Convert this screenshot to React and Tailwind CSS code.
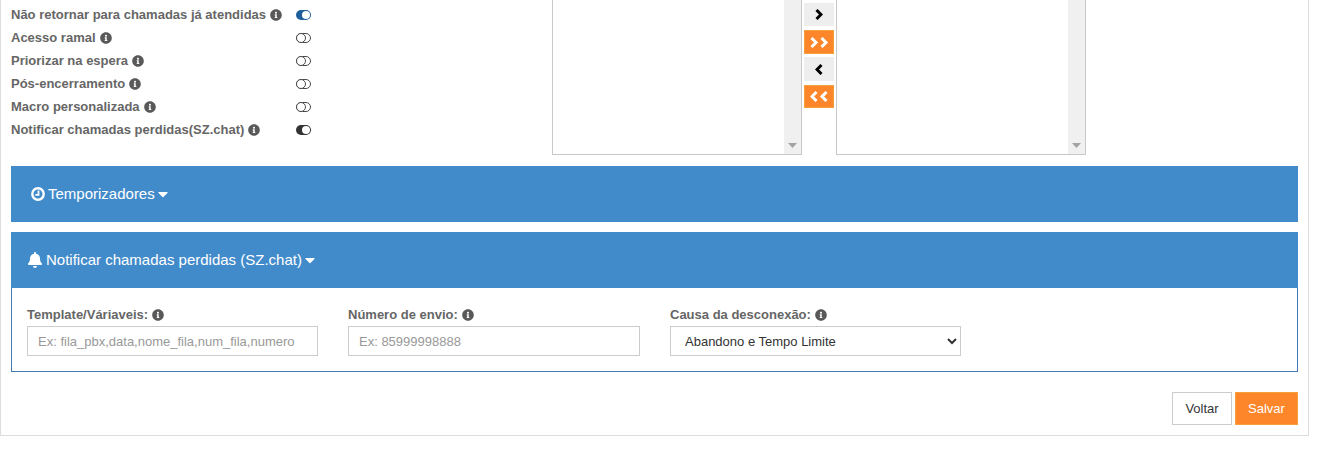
import React from "react";
import { FaInfoCircle, FaBell, FaCaretDown } from "react-icons/fa";

function Toggle({ state }) {
  if (state === "off") {
    return (
      <span className="ml-px flex h-[10px] w-[15px] items-center rounded-full border border-[#4a4a4a] bg-white">
        <span className="-ml-px h-[10px] w-[10px] shrink-0 rounded-full border border-[#4a4a4a] bg-white" />
      </span>
    );
  }
  const bg = state === "blue" ? "bg-[#1f5f9e]" : "bg-[#333333]";
  return (
    <span className={`ml-px flex h-[10px] w-[15px] items-center justify-end rounded-full pr-px ${bg}`}>
      <span className="h-2 w-2 rounded-full bg-white" />
    </span>
  );
}

const rows = [
  ["Não retornar para chamadas já atendidas", "blue"],
  ["Acesso ramal", "off"],
  ["Priorizar na espera", "off"],
  ["Pós-encerramento", "off"],
  ["Macro personalizada", "off"],
  ["Notificar chamadas perdidas(SZ.chat)", "dark"],
];

function Info() {
  return <FaInfoCircle className="ml-1 inline-block h-3 w-3 shrink-0 text-[#595959]" />;
}

function Listbox() {
  return (
    <div className="flex h-[155px] w-[250px] border border-t-0 border-[#c8c8c8] bg-white">
      <div className="flex-1" />
      <div className="flex w-[17px] flex-col items-center justify-end bg-[#f0f0f0] pb-[6px]">
        <svg width="9" height="5" viewBox="0 0 9 5"><path d="M0 0h9L4.500 5z" fill="#a3a3a3" /></svg>
      </div>
    </div>
  );
}

function Chevron({ dir, double, color }) {
  const d = dir === "right" ? "M1.500 1 6 5.500 1.500 10" : "M6.500 1 2 5.500 6.500 10";
  return (
    <svg width={double ? 19 : 8} height="11" viewBox={double ? "0 0 19 11" : "0 0 8 11"} fill="none" stroke={color} strokeWidth="3">
      <path d={d} />
      {double && <path d={d} transform="translate(10 0)" />}
    </svg>
  );
}

function Field({ label, className, children }) {
  return (
    <div className={`flex flex-col ${className}`}>
      <label className="mb-[3px] flex h-[17px] items-center text-[13px] font-bold text-[#666666]">
        {label}
        <Info />
      </label>
      {children}
    </div>
  );
}

export default function App() {
  return (
    <div className="h-[466px] overflow-hidden bg-white font-['Liberation_Sans',Arial,sans-serif]">
      <div className="h-[436px] w-[1309px] border-x border-b border-[#dddddd] pl-[10px] pr-[10px]">
        <div className="flex h-[166px]">
          <div className="w-[541px] pt-[3px]">
            {rows.map(([t, s]) => (
              <div key={t} className="flex h-[23px] items-center">
                <span className="flex w-[284px] items-center text-[13px] font-bold text-[#666666]">
                  {t}
                  <Info />
                </span>
                <Toggle state={s} />
              </div>
            ))}
          </div>
          <Listbox />
          <div className="flex w-[34px] flex-col pl-[2px] pt-[3px]">
            <button className="flex h-[23px] w-[30px] items-center justify-center bg-[#eeeeee]"><Chevron dir="right" color="#000" /></button>
            <button className="mt-1 flex h-6 w-[30px] items-center justify-center border border-[#f5a03a] bg-[#fd862b]"><Chevron dir="right" double color="#fff" /></button>
            <button className="mt-[3px] flex h-6 w-[30px] items-center justify-center bg-[#eeeeee]"><Chevron dir="left" color="#000" /></button>
            <button className="mt-1 flex h-[23px] w-[30px] items-center justify-center border border-[#f5a03a] bg-[#fd862b]"><Chevron dir="left" double color="#fff" /></button>
          </div>
          <Listbox />
        </div>

        <div className="flex h-14 items-center bg-[#428bca] pl-5 text-[15px] text-white">
          <svg className="mr-[3px] h-[14px] w-[14px]" viewBox="0 0 14 14" fill="none" stroke="#fff">
            <circle cx="7" cy="7" r="5.700" strokeWidth="2.400" />
            <path d="M7.500 3.500V7.800H4.300" strokeWidth="1.800" />
          </svg>
          Temporizadores
          <FaCaretDown className="ml-[3px] h-4 w-[10px]" />
        </div>

        <div className="mt-[10px] h-[140px] border border-t-0 border-[#3f7ab5]">
          <div className="-mx-px flex h-14 items-center bg-[#428bca] pl-4 text-[15px] text-white">
            <FaBell className="mr-[3px] h-4 w-4" />
            Notificar chamadas perdidas (SZ.chat)
            <FaCaretDown className="ml-[3px] h-4 w-[10px]" />
          </div>
          <div className="flex pl-[15px] pt-[18px]">
            <Field label="Template/Váriaveis:" className="w-[291px]">
              <input readOnly placeholder="Ex: fila_pbx,data,nome_fila,num_fila,numero" className="h-[30px] w-full border border-[#cccccc] bg-white px-[10px] text-[13px] text-[#555555] outline-none placeholder:text-[#999999]" />
            </Field>
            <Field label="Número de envio:" className="ml-[30px] w-[292px]">
              <input readOnly placeholder="Ex: 85999998888" className="h-[30px] w-full border border-[#cccccc] bg-white px-[10px] text-[13px] text-[#555555] outline-none placeholder:text-[#999999]" />
            </Field>
            <Field label="Causa da desconexão:" className="ml-[30px] w-[291px]">
              <select defaultValue="a" className="h-[30px] w-full appearance-auto border border-[#cccccc] bg-white pl-[10px] text-[13px] text-[#333333] outline-none">
                <option value="a">Abandono e Tempo Limite</option>
              </select>
            </Field>
          </div>
        </div>

        <div className="mt-5 flex justify-end gap-[3px]">
          <button className="h-[33px] w-[60px] border border-[#cccccc] bg-white text-[13px] text-[#333333]">Voltar</button>
          <button className="h-[33px] w-[63px] border border-[#f5a03a] bg-[#fd862b] text-[13px] text-white">Salvar</button>
        </div>
      </div>
    </div>
  );
}
